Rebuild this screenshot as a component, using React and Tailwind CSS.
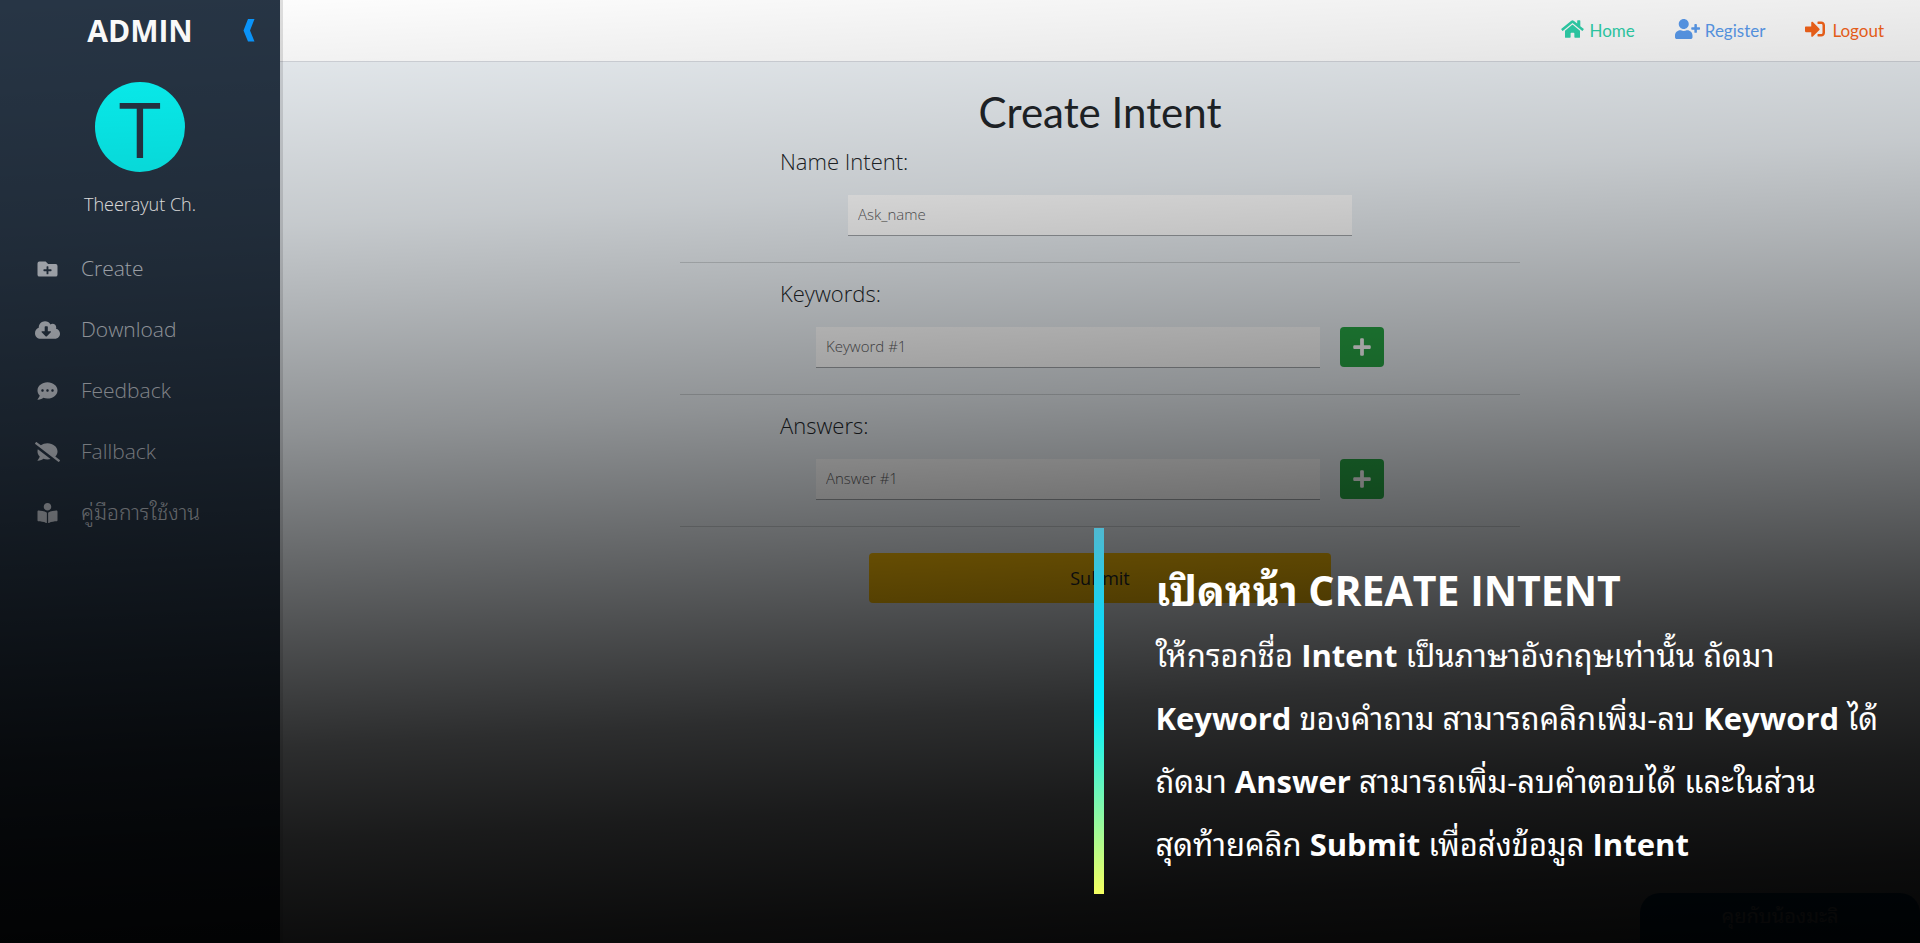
import { FaFolderPlus, FaCloudDownloadAlt, FaCommentDots, FaCommentSlash, FaBookReader, FaHome, FaUserPlus, FaSignInAlt, FaPlus } from "react-icons/fa";

const navItems = [
  { label: "Create", Icon: FaFolderPlus },
  { label: "Download", Icon: FaCloudDownloadAlt },
  { label: "Feedback", Icon: FaCommentDots },
  { label: "Fallback", Icon: FaCommentSlash },
  { label: "คู่มือการใช้งาน", Icon: FaBookReader },
];

function Sidebar() {
  return (
    <aside className="relative z-10 flex w-[280px] shrink-0 flex-col bg-[#273545] shadow-[3px_0_0_rgba(0,0,0,0.12)]">
      <div className="relative flex h-[60px] items-center justify-center">
        <h2 className="text-[30px] font-bold text-white">ADMIN</h2>
        <button type="button" aria-label="Collapse menu" className="absolute right-[25px] top-[18px]">
          <svg viewBox="0 0 12 24" className="h-6 w-3 fill-[#0a97ff]">
            <path d="M5 1h6.500L7 12.500l4.500 11H5L0.500 12.500z" />
          </svg>
        </button>
      </div>
      <div className="mt-[22px] flex flex-col items-center">
        <div className="flex h-[90px] w-[90px] items-center justify-center rounded-full bg-[#09f7f7] pt-1 text-[76px] leading-none text-[#273545]">T</div>
        <p className="mt-5 text-[18px] font-light leading-6 text-white">Theerayut Ch.</p>
      </div>
      <nav className="mt-[22px] flex flex-col">
        {navItems.map(({ label, Icon }) => (
          <a key={label} href="#" className="flex h-[61px] items-center gap-[21px] pl-[35px] text-[21px] font-light text-[#c3c8d0]">
            <Icon className="h-5 w-[25px]" />
            {label}
          </a>
        ))}
      </nav>
    </aside>
  );
}

function Header() {
  return (
    <header className="flex h-[62px] items-center justify-end gap-10 border-b border-[#d5d8de] bg-white pr-9 font-['Lato',sans-serif] text-[17px]">
      <a href="#" className="flex items-center gap-[5px] text-[#2fd3ac]"><FaHome className="mb-1 h-5 w-[23px]" />Home</a>
      <a href="#" className="flex items-center gap-[5px] text-[#5b9df0]"><FaUserPlus className="mb-1 h-5 w-[25px]" />Register</a>
      <a href="#" className="flex items-center gap-[7px] text-[#f9651a]"><FaSignInAlt className="mb-1 h-5 w-5" />Logout</a>
    </header>
  );
}

function Field({ id, label, placeholder, addable }) {
  return (
    <div className="flex h-[132px] flex-col border-b border-black/15">
      <label htmlFor={id} className="ml-[100px] mt-[14px] text-[22px] font-light leading-8">{label}</label>
      <div className="mt-[18px] flex justify-center gap-5">
        <input id={id} placeholder={placeholder} className="h-[41px] w-3/5 border-b border-[#a0a4a8] bg-white px-[10px] pb-[2px] text-[15px] font-light placeholder:text-[#5c5c60]" />
        {addable && (
          <button type="button" aria-label={"Add to " + label} className="flex h-10 w-11 items-center justify-center rounded-[4px] bg-[#28a745] text-white">
            <FaPlus className="h-5 w-5" />
          </button>
        )}
      </div>
    </div>
  );
}

export default function App() {
  return (
    <div className="relative flex min-h-screen overflow-hidden bg-[#edf2f6] font-['Open_Sans','Noto_Sans_Thai_Looped','Sarabun','Loma','Garuda','Waree','Noto_Serif_Thai',sans-serif] text-[#212529]">
      <Sidebar />
      <div className="flex min-w-0 flex-1 flex-col">
        <Header />
        <main className="flex flex-col items-center">
          <h1 className="mt-6 font-['Lato',sans-serif] text-[42px] leading-[52px]">Create Intent</h1>
          <form className="-mt-[7px] flex w-[840px] max-w-full flex-col">
            <Field id="intent" label="Name Intent:" placeholder="Ask_name" />
            <Field id="keyword" label="Keywords:" placeholder="Keyword #1" addable />
            <Field id="answer" label="Answers:" placeholder="Answer #1" addable />
            <button type="button" className="mt-[26px] h-[50px] w-[55%] self-center rounded-[4px] bg-[#ffc107] text-[18px]">Submit</button>
          </form>
        </main>
      </div>

      <button type="button" className="absolute -bottom-2 right-0 flex h-[58px] w-[280px] items-center justify-center rounded-t-[20px] bg-[#005a9c] pb-3 text-[20px] text-white">คุยกับน้องมะลิ</button>

      <div className="pointer-events-none absolute inset-0 z-20 bg-[linear-gradient(177deg,rgba(0,0,0,0)_0%,rgba(0,0,0,0.08)_11%,rgba(0,0,0,0.17)_23%,rgba(0,0,0,0.26)_31%,rgba(0,0,0,0.40)_43%,rgba(0,0,0,0.57)_55%,rgba(0,0,0,0.68)_63%,rgba(0,0,0,0.81)_73%,rgba(0,0,0,0.89)_82%,rgba(0,0,0,0.95)_92%,rgba(0,0,0,0.98)_100%)]" />

      <section className="absolute bottom-[49px] left-[57%] right-0 z-30 flex h-[366px] text-white">
        <div className="w-[10px] shrink-0 bg-[linear-gradient(180deg,#50b8d0_0%,#00dfff_33%,#00f0ff_50%,#f5ff60_100%)]" />
        <div className="pl-[51px] pt-[28px]">
          <h2 className="text-[41px] font-bold leading-[68px]">เปิดหน้า CREATE INTENT</h2>
          <p className="text-[31px] leading-[63px]">
            ให้กรอกชื่อ <b>Intent</b> เป็นภาษาอังกฤษเท่านั้น ถัดมา<br />
            <b>Keyword</b> ของคำถาม สามารถคลิกเพิ่ม-ลบ <b>Keyword</b> ได้<br />
            ถัดมา <b>Answer</b> สามารถเพิ่ม-ลบคำตอบได้ และในส่วน<br />
            สุดท้ายคลิก <b>Submit</b> เพื่อส่งข้อมูล <b>Intent</b>
          </p>
        </div>
      </section>
    </div>
  );
}
